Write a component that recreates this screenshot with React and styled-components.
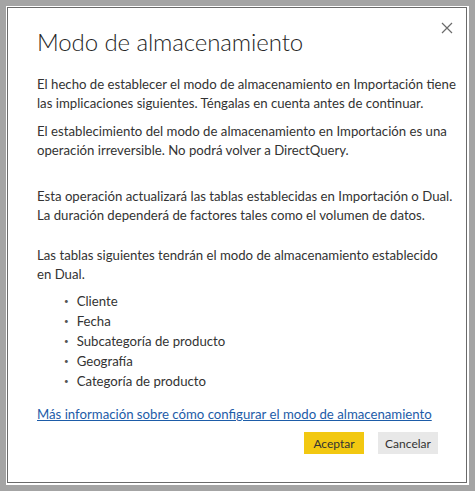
import styled, { createGlobalStyle } from "styled-components";

const GlobalStyle = createGlobalStyle`
  html, body {
    margin: 0;
    padding: 0;
    background: #a4a4a4;
  }
  body {
    font-family: Lato, "Open Sans", sans-serif;
  }
`;

const Frame = styled.div`
  margin: 6px;
  width: 463px;
  height: 479px;
  background: #ffffff;
  padding: 1px 2px 2px 1px;
  box-sizing: border-box;
`;

const Dialog = styled.div`
  position: relative;
  height: 100%;
  box-sizing: border-box;
  border: 1px solid #6a6a6a;
  padding: 17px 8px 0 29px;
  color: #333333;
`;

const Close = styled.button`
  position: absolute;
  top: 9px;
  right: 8px;
  width: 22px;
  height: 22px;
  padding: 0;
  border: none;
  background: transparent;
  display: flex;
  align-items: center;
  justify-content: center;
  cursor: pointer;
`;

const Title = styled.h1`
  margin: 0 0 16px;
  font-size: 24px;
  line-height: 34px;
  font-weight: 300;
  letter-spacing: -0.1px;
  color: #252525;
`;

const Para = styled.p`
  margin: 0 0 ${(p) => p.gap || 8}px;
  font-size: 13.2px;
  line-height: 19px;
  white-space: nowrap;
`;

const List = styled.ul`
  margin: 0 0 14px;
  padding: 0 0 0 27px;
  list-style: none;
  font-size: 13.2px;
  line-height: 20px;
`;

const Item = styled.li`
  display: flex;
  gap: 8px;
  &::before {
    content: "•";
    font-size: 8px;
    color: #555555;
  }
`;

const Link = styled.a`
  display: block;
  font-size: 13.2px;
  line-height: 19px;
  color: #1d5ca8;
  text-decoration: underline;
  white-space: nowrap;
`;

const Actions = styled.div`
  display: flex;
  justify-content: flex-end;
  gap: 14px;
  margin-top: 8px;
  padding-right: 20px;
`;

const Button = styled.button`
  width: 60px;
  height: 22px;
  border: none;
  padding: 0;
  font-family: inherit;
  font-size: 12px;
  color: #333333;
  background: ${(p) => (p.primary ? "#f2c811" : "#e8e8e8")};
`;

const tables = [
  "Cliente",
  "Fecha",
  "Subcategoría de producto",
  "Geografía",
  "Categoría de producto",
];

export default function App() {
  return (
    <>
      <GlobalStyle />
      <Frame>
        <Dialog>
          <Close aria-label="Cerrar">
            <svg width="12" height="12" viewBox="0 0 12 12">
              <path d="M1 1 L11 11 M11 1 L1 11" stroke="#6b6b6b" strokeWidth="1.2" />
            </svg>
          </Close>
          <Title>Modo de almacenamiento</Title>
          <Para gap={9}>
            El hecho de establecer el modo de almacenamiento en Importación tiene
            <br />
            las implicaciones siguientes. Téngalas en cuenta antes de continuar.
          </Para>
          <Para gap={27}>
            El establecimiento del modo de almacenamiento en Importación es una
            <br />
            operación irreversible. No podrá volver a DirectQuery.
          </Para>
          <Para gap={21}>
            Esta operación actualizará las tablas establecidas en Importación o Dual.
            <br />
            La duración dependerá de factores tales como el volumen de datos.
          </Para>
          <Para gap={7}>
            Las tablas siguientes tendrán el modo de almacenamiento establecido
            <br />
            en Dual.
          </Para>
          <List>
            {tables.map((t) => (
              <Item key={t}>{t}</Item>
            ))}
          </List>
          <Link href="#">Más información sobre cómo configurar el modo de almacenamiento</Link>
          <Actions>
            <Button primary>Aceptar</Button>
            <Button>Cancelar</Button>
          </Actions>
        </Dialog>
      </Frame>
    </>
  );
}
